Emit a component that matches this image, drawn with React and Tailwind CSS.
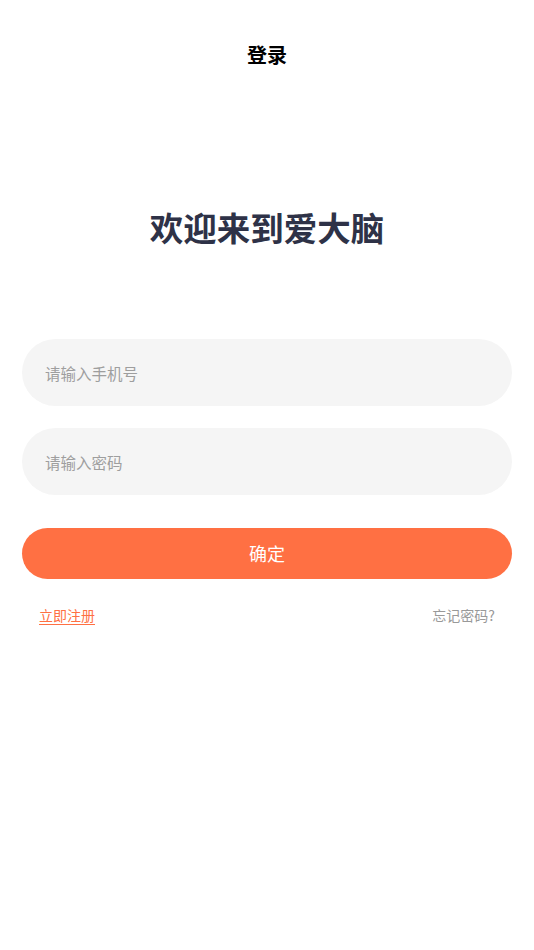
export default function App() {
  return (
    <div
      className="min-h-[950px] w-full bg-white flex flex-col"
      style={{ fontFamily: '"Noto Sans CJK SC", "Noto Sans", sans-serif' }}
    >
      <div className="pt-[41px] h-[70px] flex justify-center">
        <h1 className="text-[20px] leading-[28px] font-bold text-black">登录</h1>
      </div>

      <div className="mt-[135px] h-[44px] flex justify-center">
        <h2 className="text-[33.5px] leading-[44px] font-semibold text-[#2e3247]">欢迎来到爱大脑</h2>
      </div>

      <div className="mt-[90px] px-[22px] flex flex-col">
        <input
          className="h-[67px] w-full rounded-full bg-[#f5f5f5] px-[23px] text-[15.5px] text-[#333] placeholder:text-[#9e9e9e] outline-none"
          placeholder="请输入手机号"
        />
        <input
          type="password"
          className="mt-[22px] h-[67px] w-full rounded-full bg-[#f5f5f5] px-[23px] text-[15.5px] text-[#333] placeholder:text-[#9e9e9e] outline-none"
          placeholder="请输入密码"
        />
        <button className="mt-[33px] h-[51px] w-full rounded-full bg-[#ff7043] text-white text-[18px]">
          确定
        </button>
        <div className="mt-[26px] px-[17px] flex justify-between items-center text-[14px] leading-[20px]">
          <a className="text-[#ff7043] underline underline-offset-[3px]">立即注册</a>
          <span className="text-[#999999]">忘记密码?</span>
        </div>
      </div>
    </div>
  )
}
